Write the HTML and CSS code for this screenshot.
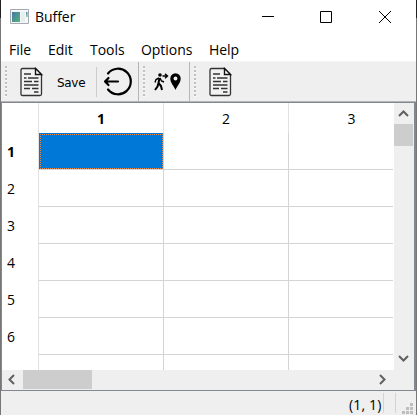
FILE: index.html
```html
<!DOCTYPE html>
<html lang="en">
<head>
<meta charset="utf-8">
<title>Buffer</title>
<link rel="stylesheet" href="styles.css">
</head>
<body>
<svg width="0" height="0" class="defs"><defs>
<symbol id="doc" viewBox="0 0 24 30">
<path d="M2.500 1.500H15.500L21.500 7.500V27Q21.500 28.500 20 28.500H2.500Q1 28.500 1 27V3Q1 1.500 2.500 1.500Z" fill="#f2f2f2" stroke="#333" stroke-width="1.300"/>
<path d="M15.500 1.500V7.500H21.500Z" fill="#fff" stroke="#111" stroke-width="1.400"/>
<path d="M4 7H11M4 11H6.500M8 11H18.500M4 14.500H12M14 14.500H18.500M4 18H18.500M4 21.500H10M12 21.500H18.500M14 25H18.500" stroke="#333" stroke-width="1.300"/>
</symbol>
</defs></svg>
<div class="window">
<header class="title">
<svg class="app" width="19" height="15" viewBox="0 0 19 15"><defs><linearGradient id="g" x2="1" y2="1"><stop stop-color="#4579a9"/><stop offset="1" stop-color="#55b279"/></linearGradient></defs><path d="M.5.500H18.500V14.500H.500Z" fill="#f4f6f7" stroke="#a5abb0"/><path d="M2 3H10V13H2Z" fill="url(#g)"/><path d="M11 3H15V13H11Z" fill="#e8eeee"/><path d="M16 3H17.500V8H16.500Z" fill="url(#g)"/></svg>
<span class="name">Buffer</span>
<svg class="controls" width="141" height="14" viewBox="0 0 141 14" fill="none" stroke="#000"><path d="M0 6.500H12M58.500 1.500H69.500V12.500H58.500Z"/><path d="M117 1L129 13M129 1L117 13"/></svg>
</header>
<nav class="menu"><span class="file">File</span><span class="edit">Edit</span><span class="tools">Tools</span><span class="options">Options</span><span class="help">Help</span></nav>
<div class="toolbar">
<div class="group first"><i class="grip"></i><svg class="doc" width="24" height="30"><use href="#doc"/></svg><span class="save">Save</span><i class="sep"></i>
<svg class="exit" width="30" height="30" viewBox="0 0 30 30" fill="none" stroke="#000" stroke-width="2.200" stroke-linecap="round"><path d="M5 6.500A12.800 12.800 0 1 1 5 22.500"/><path d="M2 14.500H15M5.500 11L2 14.500L5.500 18" stroke-linejoin="round"/></svg></div>
<div class="group second"><i class="grip"></i>
<svg class="walk" width="28" height="18" viewBox="0 0 28 18" fill="none" stroke="#000"><circle cx="6" cy="2" r="1.800" fill="#000" stroke="none"/><path d="M5.500 5L4.500 10L7 13L8 17M4.500 10L3.500 13.500L1 17" stroke-width="2"/><path d="M5 5L2 6.500L1 9.500M6 5L7.500 8L10 9" stroke-width="1.400"/><path d="M8.500 3H13.500M11 .800L13.500 3L11 5.200" stroke-width="1.400"/><path d="M21.500 17C20 13 16.300 10 16.300 5.500A5.200 5.200 0 0 1 26.700 5.500C26.700 10 23 13 21.500 17Z" fill="#000" stroke="none"/><circle cx="21.500" cy="5.500" r="1.900" fill="#efefef" stroke="none"/></svg></div>
<div class="group third"><i class="grip"></i><svg class="doc" width="24" height="30"><use href="#doc"/></svg></div>
</div>
<main class="frame">
<div class="sheet">
<div></div><div class="head bold">1</div><div class="head">2</div><div class="head">3</div>
<div class="row bold">1</div><div class="cell selected"></div><div class="cell"></div><div class="cell"></div>
<div class="row">2</div><div class="cell"></div><div class="cell"></div><div class="cell"></div>
<div class="row">3</div><div class="cell"></div><div class="cell"></div><div class="cell"></div>
<div class="row">4</div><div class="cell"></div><div class="cell"></div><div class="cell"></div>
<div class="row">5</div><div class="cell"></div><div class="cell"></div><div class="cell"></div>
<div class="row">6</div><div class="cell"></div><div class="cell"></div><div class="cell"></div>
<div class="row"></div><div class="cell"></div><div class="cell"></div><div class="cell"></div>
</div>
<div class="vscroll"><svg width="20" height="21" viewBox="0 0 20 21"><path d="M5 13L9.500 8.500L14 13"/></svg><i class="vthumb"></i><svg class="down" width="20" height="21" viewBox="0 0 20 21"><path d="M5 7L9.500 11.500L14 7"/></svg></div>
<div class="hscroll"><svg width="21" height="20" viewBox="0 0 21 20"><path d="M12 5L7.500 9.500L12 14"/></svg><i class="hthumb"></i><svg class="right" width="21" height="20" viewBox="0 0 21 20"><path d="M7 5L11.500 9.500L7 14"/></svg></div>
<div class="corner"></div>
</main>
<footer class="status"><span class="coords">(1, 1)</span><i></i><i class="second-line"></i><svg width="11" height="11" viewBox="0 0 11 11" fill="#bdbdbd"><path d="M8 0h3v3h-3zM4 4h3v3h-3zM8 4h3v3h-3zM0 8h3v3h-3zM4 8h3v3h-3zM8 8h3v3h-3z"/></svg></footer>
</div>
</body>
</html>
```
FILE: styles.css
```css
*{box-sizing:border-box}
body{margin:0;background:#fff;font:14px/20px "Open Sans","Noto Sans",sans-serif;color:#000;overflow:hidden}
.defs{display:none}
svg{display:block;flex:none}
.window{width:417px;height:415px;border:solid #777;border-width:0 1px;border-image:linear-gradient(#222 0 19px,#777 19px) 1;display:flex;flex-direction:column}
.title{height:36px;display:flex;padding-left:9px}
.app{margin-top:9px}
.name{margin:7px 0 0 6px;width:227px;letter-spacing:-.05px}
.controls{margin-top:10px}
.menu{height:25px;display:flex;padding:4px 0 0 8px;letter-spacing:-.05px}
.file{width:39px}.edit{width:42px}.tools{width:51px}.options{width:68px}
.toolbar{height:41px;background:#efefef;border-top:1px solid #f5f5f5;border-bottom:1px solid #b5b5b5;display:flex}
.group{display:flex;border-right:1px solid #b5b5b5}
.first{width:138px}.second{width:51px}.third{flex:1;border:0}
.grip{width:2px;height:32px;margin:4px 0 0 4px;background:repeating-linear-gradient(#c0c0c0 0 2px,#fafafa 2px 3px,transparent 3px 4px);flex:none}
.doc{margin:5px 0 0 13px}
.save{font:12px/20px "DejaVu Sans",sans-serif;letter-spacing:-.3px;margin:11px 0 0 13px;width:39px}
.sep{width:1px;height:30px;background:#ccc;margin-top:5px}
.exit{margin:5px 0 0 6px}
.walk{margin:11px 0 0 9px}
.frame{height:289px;border:1px solid #828790;border-right-width:2px;display:grid;grid-template-columns:392px 20px;grid-template-rows:267px 20px}
.sheet{display:grid;grid-template-columns:37px 125px 125px 104px;grid-template-rows:30px repeat(6,37px) 15px;overflow:hidden;text-align:center}
.head{border-right:1px solid #e1e1e1;padding-top:6px}
.head:nth-child(2){border-left:1px solid #e1e1e1;margin-left:-1px}
.head:nth-child(4){border:0;width:125px}
.bold{font-weight:700}
.row{text-align:left;padding:9px 0 0 5px;border-right:1px solid #e1e1e1}
.cell{border-right:1px solid #d4d4d4;border-bottom:1px solid #d4d4d4}
.cell:nth-child(4n){border-right:0}
.cell:nth-last-child(-n+3){border-bottom:0}
.selected{background:#0078d7;background-clip:padding-box;outline:1px dotted #e08a50;outline-offset:-2px}
.vscroll,.hscroll,.corner{background:#efefef}
.vscroll{display:flex;flex-direction:column}
.vthumb{width:19px;height:22px;background:#cdcdcd}
.down{margin-top:auto}
.hscroll{display:flex}
.hthumb{width:69px;height:19px;background:#cdcdcd}
.right{margin-left:auto}
.vscroll path,.hscroll path{fill:none;stroke:#606060;stroke-width:2}
.status{height:24px;background:#efefef;display:flex;padding-left:348px}
.coords{width:34px;padding-top:4px;letter-spacing:.15px;white-space:nowrap}
.status i{width:1px;height:20px;margin-top:2px;background:#d4d4d4}
.second-line{margin-left:11px}
.status svg{margin:12px 0 0 6px}
```
